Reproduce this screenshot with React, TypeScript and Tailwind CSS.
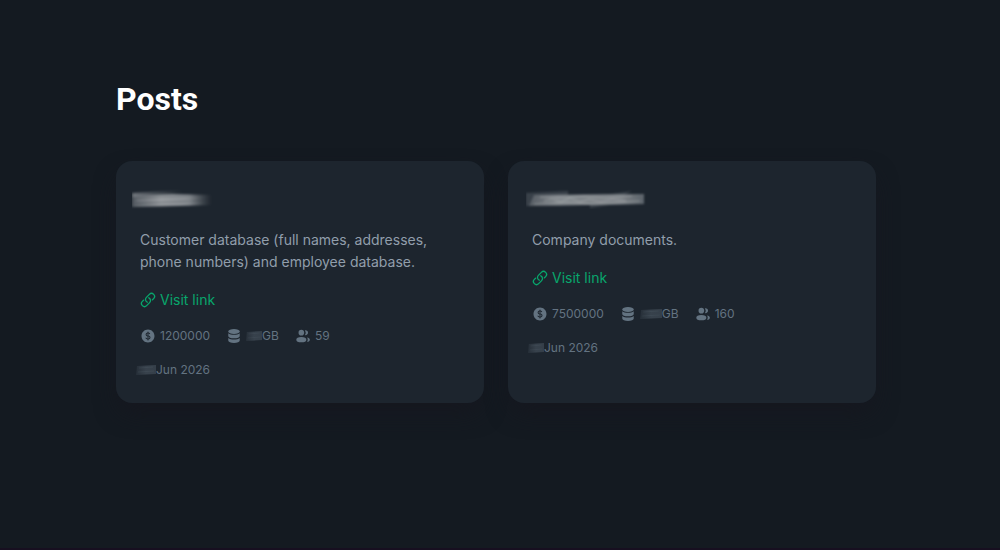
import type { ReactNode } from "react";
import { HiOutlineLink, HiCurrencyDollar } from "react-icons/hi2";

function DatabaseIcon() {
  return (
    <svg viewBox="0 0 24 24" className="size-4 shrink-0" fill="currentColor" aria-hidden="true">
      <ellipse cx="12" cy="5.2" rx="8.6" ry="3.8" />
      <path d="M3.400 7.800c2 1.800 5 2.500 8.600 2.500s6.600-.7 8.600-2.500v4.200c0 1.900-3.700 3.500-8.600 3.500s-8.600-1.600-8.600-3.500Z" />
      <path d="M3.400 15c2 1.600 5 2.300 8.600 2.300s6.600-.7 8.600-2.300v3.800c0 2-3.700 3.700-8.600 3.700s-8.600-1.700-8.600-3.700Z" />
    </svg>
  );
}

function UsersIcon() {
  return (
    <svg viewBox="0 0 24 24" className="size-4 shrink-0" fill="currentColor" aria-hidden="true">
      <circle cx="9.500" cy="7" r="4.200" />
      <path d="M15 10.600a7.200 7.200 0 0 0 0-7.200 3.700 3.700 0 1 1 0 7.200Z" />
      <ellipse cx="9.500" cy="17.500" rx="7.500" ry="4" />
      <path d="M18 20.800c1.500-2 1.500-4.600 0-6.600 2.700.2 4.300 1.700 4.300 3.300s-1.600 3.100-4.300 3.300Z" />
    </svg>
  );
}

function TitleSmudgeShort() {
  return (
    <svg viewBox="0 0 84 20" className="-ml-2 h-5 w-[84px]" aria-hidden="true">
      <defs>
        <linearGradient id="fadeShort">
          <stop offset="0" stopColor="#8b9095" stopOpacity="0.6" />
          <stop offset="0.35" stopColor="#b2b5b8" stopOpacity="0.9" />
          <stop offset="0.7" stopColor="#a5a9ad" stopOpacity="0.85" />
          <stop offset="0.97" stopColor="#808589" stopOpacity="0" />
        </linearGradient>
        <linearGradient id="fadeStroke">
          <stop offset="0" stopColor="#a5a9ad" stopOpacity="0.6" />
          <stop offset="1" stopColor="#808589" stopOpacity="0" />
        </linearGradient>
        <filter id="softShort" x="0" y="-30%" width="110%" height="160%">
          <feGaussianBlur stdDeviation="1.5 0.8" />
        </filter>
      </defs>
      <g filter="url(#softShort)">
        <path d="m0 4 50-3v4L0 8Z" fill="url(#fadeStroke)" />
        <path d="m0 7 40-2 42 1v10l-34 1-48 1Z" fill="url(#fadeShort)" fillOpacity="0.8" />
        <path d="m4 10 70-2v2L4 13Zm0 6 66-3v2L4 17Z" fill="url(#fadeShort)" fillOpacity="0.5" />
      </g>
    </svg>
  );
}

function TitleSmudgeLong() {
  return (
    <svg viewBox="0 0 122 20" className="-ml-2 h-5 w-[122px]" aria-hidden="true">
      <defs>
        <linearGradient id="fadeLong">
          <stop offset="0" stopColor="#989da1" stopOpacity="0.4" />
          <stop offset="0.25" stopColor="#a3a7aa" stopOpacity="0.9" />
          <stop offset="0.8" stopColor="#a3a7aa" stopOpacity="0.85" />
          <stop offset="1" stopColor="#7b8288" stopOpacity="0.7" />
        </linearGradient>
        <filter id="softLong" x="0" y="-30%" width="110%" height="160%">
          <feGaussianBlur stdDeviation="0.8" />
        </filter>
      </defs>
      <g filter="url(#softLong)">
        <path d="m2 4 42-2v4l43-1 21-3-8 4 20-1v10l-34 1-20 3V16L2 17Z" fill="#7b8288" fillOpacity="0.3" />
        <path d="m10 6 110-1v10L5 17Z" fill="url(#fadeLong)" fillOpacity="0.75" />
        <g fill="none" stroke="#c3c6c8" strokeOpacity="0.25" strokeWidth="1.5">
          <path d="m10 15 34-2 22 2 50-3" />
          <path d="m16 8 24 1 20-2 20 2 28-2" />
          <path d="m20 12 8-2 9 3 9-4 10 4 9-3 12 3 11-3 14 2" />
        </g>
      </g>
    </svg>
  );
}

function Smudge({ className }: { className: string }) {
  return (
    <svg viewBox="0 0 20 10" preserveAspectRatio="none" className={`h-[10px] shrink-0 ${className}`} aria-hidden="true">
      <defs>
        <linearGradient id="smudgeFade">
          <stop offset="0" stopColor="#424d58" stopOpacity="0.3" />
          <stop offset="0.5" stopColor="#424d58" stopOpacity="0.9" />
          <stop offset="1" stopColor="#424d58" stopOpacity="0.8" />
        </linearGradient>
      </defs>
      <path d="m1 1 19-1v9L0 10Z" fill="url(#smudgeFade)" fillOpacity="0.8" />
      <path d="m3 3 14-1M2 7l16-1" stroke="#5c6874" strokeOpacity="0.2" fill="none" />
    </svg>
  );
}

type Post = {
  id: string;
  title: ReactNode;
  description: string;
  price: string;
  sizeSmudge: string;
  dateSmudge: string;
  people: string;
};

const posts: Post[] = [
  {
    id: "first",
    title: <TitleSmudgeShort />,
    description: "Customer database (full names, addresses, phone numbers) and employee database.",
    price: "1200000",
    sizeSmudge: "w-4",
    dateSmudge: "w-5",
    people: "59",
  },
  {
    id: "second",
    title: <TitleSmudgeLong />,
    description: "Company documents.",
    price: "7500000",
    sizeSmudge: "w-[22px]",
    dateSmudge: "w-4",
    people: "160",
  },
];

function PostCard({ post }: { post: Post }) {
  return (
    <article className="rounded-2xl bg-[#1d252e] p-6 shadow-[0_12px_24px_-4px_#16171f]">
      <div className="flex h-7 items-end pb-1">{post.title}</div>
      <p className="mt-4 text-sm leading-[22px] text-[#919eab]">{post.description}</p>
      <a href="#" className="mt-4 flex w-fit items-center gap-1 text-sm leading-[22px] text-[#08a66c]">
        <HiOutlineLink className="size-4 stroke-2" aria-hidden="true" />
        Visit link
      </a>
      <div className="mt-4 flex items-center gap-4 text-xs leading-[18px] text-[#637381]">
        <span className="flex items-center gap-1">
          <HiCurrencyDollar className="size-4" aria-hidden="true" />
          {post.price}
        </span>
        <span className="flex items-center gap-1">
          <DatabaseIcon />
          <span className="flex items-center">
            <Smudge className={post.sizeSmudge} />
            GB
          </span>
        </span>
        <span className="flex items-center gap-1">
          <UsersIcon />
          {post.people}
        </span>
      </div>
      <div className="mt-4 -ml-1 flex items-center text-xs leading-[18px] text-[#637381]">
        <Smudge className={post.dateSmudge} />
        Jun 2026
      </div>
    </article>
  );
}

export default function App() {
  return (
    <main className="flex min-h-screen flex-col border-b-2 border-[#170f20] bg-[#141a21] pt-[75px] pr-[124px] pl-[116px] font-['Inter','Noto_Sans',sans-serif]">
      <h1 className="font-['Roboto',sans-serif] text-[32px] leading-[48px] font-bold text-white">Posts</h1>
      <div className="mt-[38px] grid grid-cols-2 gap-6 pb-10">
        {posts.map((post) => (
          <PostCard key={post.id} post={post} />
        ))}
      </div>
    </main>
  );
}
